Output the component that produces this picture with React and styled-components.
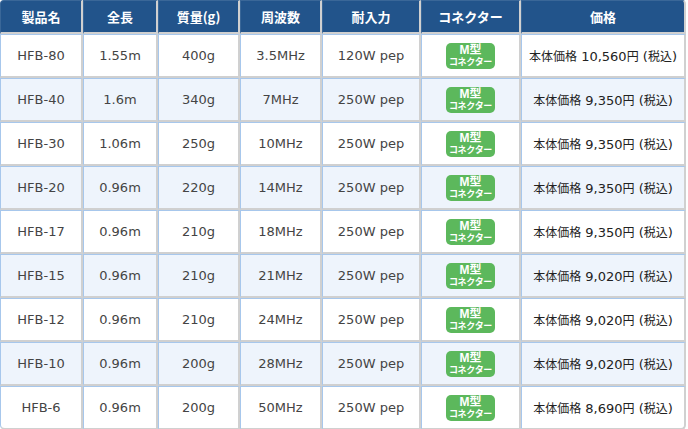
import React from "react";
import styled, {createGlobalStyle} from "styled-components";

const GlobalStyle = createGlobalStyle`
	html, body {
		margin: 0;
		padding: 0;
		background: #fff;
	}
`;

const Table = styled.table`
	border-collapse: separate;
	border-spacing: 0;
	table-layout: fixed;
	width: 686px;
	font-family: "DejaVu Sans", "Noto Sans CJK JP", sans-serif;
`;

const HeadCell = styled.th`
	height: 31px;
	padding: 0;
	background: #22548b;
	color: #fff;
	font-family: "Noto Sans CJK JP", sans-serif;
	font-size: 13px;
	font-weight: bold;
	text-align: center;
	border-top: 1px solid #3a6798;
	border-left: 1px solid #3a6798;
	border-right: 2px solid #d0d0d0;
	border-bottom: 2px solid #d0d0d0;
	&:first-child {
		border-top-left-radius: 4px;
	}
	&:last-child {
		border-top-right-radius: 4px;
	}
`;

const Row = styled.tr`
	background: ${p => (p.$alt ? "#eef4fc" : "#ffffff")};
`;

const Cell = styled.td`
	height: 41px;
	padding: 0;
	text-align: center;
	font-size: 13px;
	color: #444;
	border-top: 1px solid #a7c7ec;
	border-left: 1px solid #a7c7ec;
	border-right: 2px solid #d0d0d0;
	border-bottom: 2px solid #d0d0d0;
	tr:last-child > &:first-child {
		border-bottom-left-radius: 5px;
	}
	tr:last-child > &:last-child {
		border-bottom-right-radius: 5px;
	}
`;

const Price = styled.span`
	font-size: 13px;
	color: #222;
	white-space: nowrap;
`;

const Kanji = styled.span`
	font-family: "Noto Sans CJK JP", sans-serif;
	font-size: 12px;
`;

const Badge = styled.span`
	display: inline-flex;
	flex-direction: column;
	align-items: center;
	justify-content: center;
	width: 49px;
	height: 26px;
	border-radius: 5px;
	background: #5cb85c;
	color: #fff;
	font-family: "Liberation Sans", "Noto Sans CJK JP", sans-serif;
	font-weight: bold;
	vertical-align: middle;
`;

const BadgeTop = styled.span`
	display: block;
	height: 13px;
	font-size: 12px;
	line-height: 13px;
`;

const BadgeBottom = styled.span`
	display: block;
	height: 11px;
	font-size: 9px;
	line-height: 11px;
	letter-spacing: -0.3px;
`;

const columns = [
	{title: "製品名", width: 83},
	{title: "全長", width: 75},
	{title: "質量(g)", width: 82},
	{title: "周波数", width: 82},
	{title: "耐入力", width: 99},
	{title: "コネクター", width: 100},
	{title: "価格", width: 165},
];

const products = [
	["HFB-80", "1.55m", "400g", "3.5MHz", "120W pep", "10,560"],
	["HFB-40", "1.6m", "340g", "7MHz", "250W pep", "9,350"],
	["HFB-30", "1.06m", "250g", "10MHz", "250W pep", "9,350"],
	["HFB-20", "0.96m", "220g", "14MHz", "250W pep", "9,350"],
	["HFB-17", "0.96m", "210g", "18MHz", "250W pep", "9,350"],
	["HFB-15", "0.96m", "210g", "21MHz", "250W pep", "9,020"],
	["HFB-12", "0.96m", "210g", "24MHz", "250W pep", "9,020"],
	["HFB-10", "0.96m", "200g", "28MHz", "250W pep", "9,020"],
	["HFB-6", "0.96m", "200g", "50MHz", "250W pep", "8,690"],
];

function App() {
	return (
		<>
			<GlobalStyle />
			<Table>
				<colgroup>
					{columns.map(c => (
						<col key={c.title} style={{width: c.width}} />
					))}
				</colgroup>
				<thead>
					<tr>
						{columns.map(c => (
							<HeadCell key={c.title}>{c.title}</HeadCell>
						))}
					</tr>
				</thead>
				<tbody>
					{products.map(([name, length, weight, freq, power, price], i) => (
						<Row key={name} $alt={i % 2 === 1}>
							<Cell>{name}</Cell>
							<Cell>{length}</Cell>
							<Cell>{weight}</Cell>
							<Cell>{freq}</Cell>
							<Cell>{power}</Cell>
							<Cell>
								<Badge>
									<BadgeTop>M型</BadgeTop>
									<BadgeBottom>コネクター</BadgeBottom>
								</Badge>
							</Cell>
							<Cell>
								<Price>
									<Kanji>本体価格</Kanji> {price}<Kanji>円</Kanji> (<Kanji>税込</Kanji>)
								</Price>
							</Cell>
						</Row>
					))}
				</tbody>
			</Table>
		</>
	);
}

export default App;
